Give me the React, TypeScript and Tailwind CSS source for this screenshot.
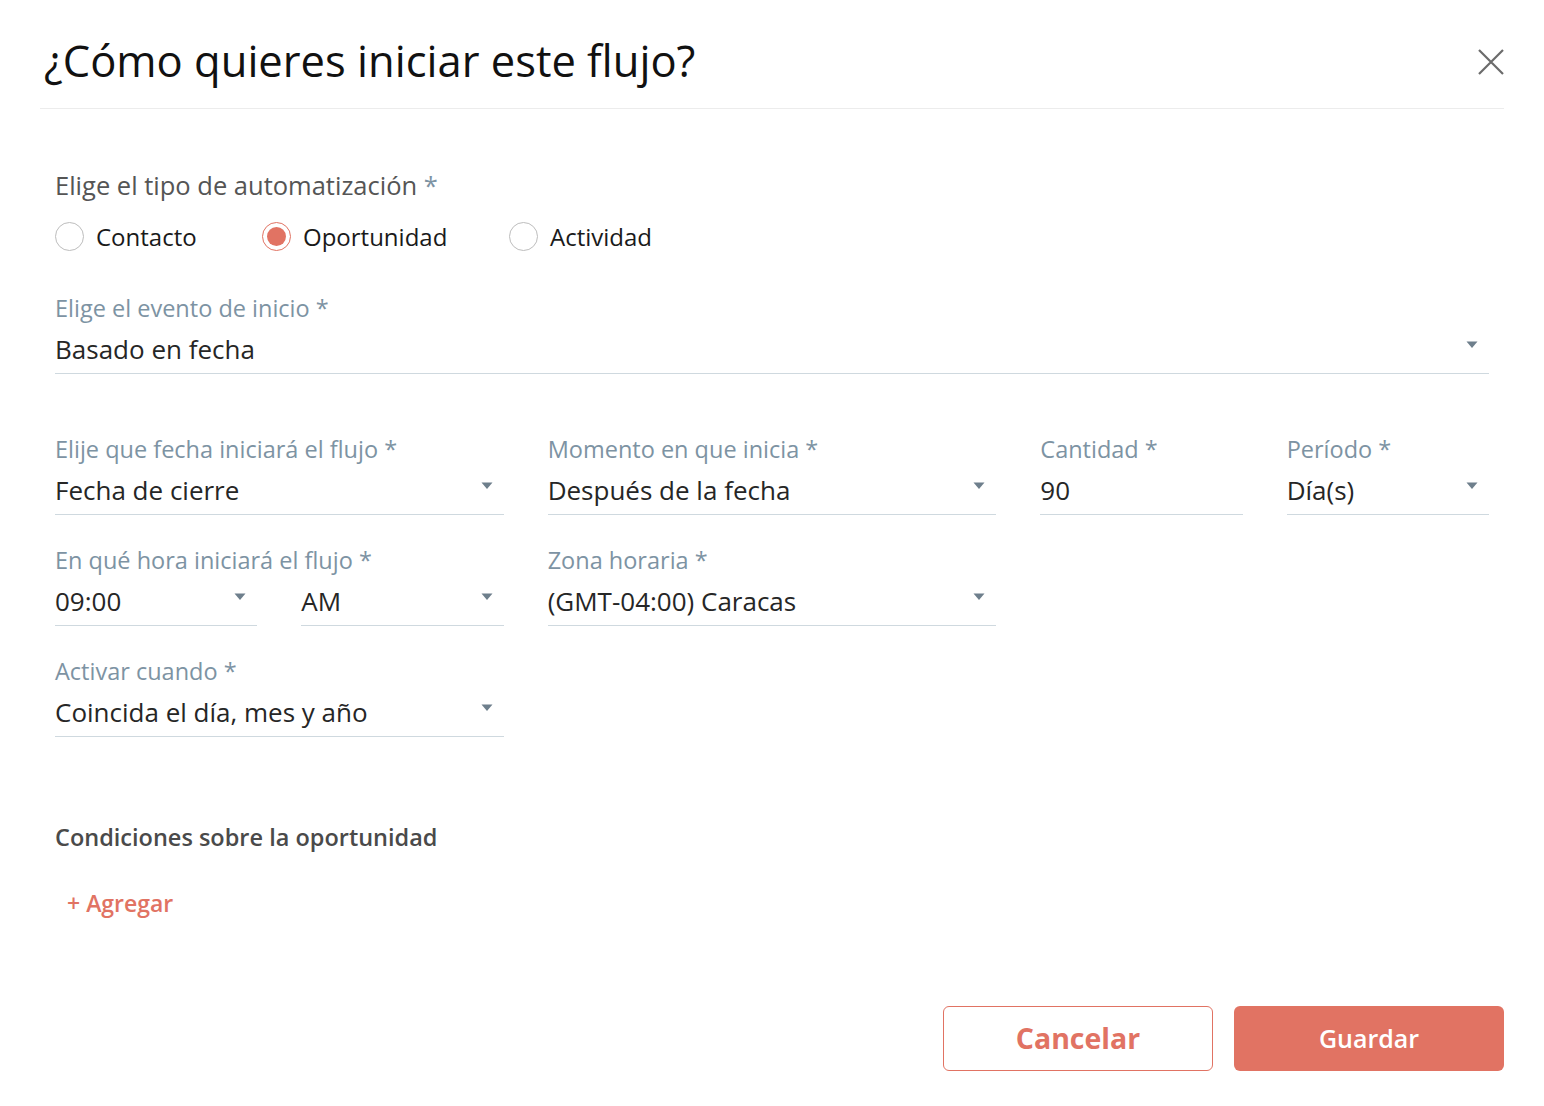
import React from "react";

const Caret = () => (
  <svg width="12" height="8" viewBox="0 0 12 8" className="shrink-0">
    <path d="M0.5 0.5 H11.5 L6 7 Z" fill="#6e7f8c" />
  </svg>
);

function Field({
  label,
  value,
  select = true,
  className = "",
}: {
  label: string;
  value: string;
  select?: boolean;
  className?: string;
}) {
  return (
    <div className={className}>
      <div className="h-[28px] whitespace-nowrap text-[23.5px] leading-[28px] text-[#7d93a3]">{label}</div>
      <div className="mt-[13px] flex items-center justify-between border-b border-[#cfd9df] pb-[10px]">
        <span className="whitespace-nowrap text-[26px] leading-[28px] text-[#262626]">{value}</span>
        {select && (
          <span className="mr-[11px] -mt-[8px]">
            <Caret />
          </span>
        )}
      </div>
    </div>
  );
}

function Radio({ label, checked = false }: { label: string; checked?: boolean }) {
  return (
    <div className="flex items-center gap-[12px]">
      <span
        className={
          checked
            ? "flex h-[29px] w-[29px] items-center justify-center rounded-full border border-[#e17363]"
            : "flex h-[29px] w-[29px] items-center justify-center rounded-full border border-[#bdbdbd]"
        }
      >
        {checked && <span className="h-[19px] w-[19px] rounded-full bg-[#e17363]" />}
      </span>
      <span className="text-[24px] leading-[28px] text-[#1a1a1a]">{label}</span>
    </div>
  );
}

export default function App() {
  return (
    <div className="h-[1106px] w-[1544px] bg-white px-[40px] font-['Open_Sans',sans-serif]">
      <header className="flex h-[109px] items-center justify-between border-b border-[#ececec] pl-[4px]">
        <h1 className="pt-[14px] text-[43.5px] leading-[48px] text-[#111]">¿Cómo quieres iniciar este flujo?</h1>
        <svg width="26" height="26" viewBox="0 0 26 26" className="mt-[16px]">
          <path d="M1 1 L25 25 M25 1 L1 25" stroke="#6b6b6b" strokeWidth="2.2" />
        </svg>
      </header>
      <main className="px-[15px]">
        <div className="mt-[62px] text-[25.5px] leading-[28px] text-[#555]">
          Elige el tipo de automatización <span className="text-[#7d93a3]">*</span>
        </div>
        <div className="mt-[23px] flex items-center">
          <div className="w-[207px]">
            <Radio label="Contacto" />
          </div>
          <div className="w-[247px]">
            <Radio label="Oportunidad" checked />
          </div>
          <Radio label="Actividad" />
        </div>

        <Field className="mt-[43px]" label="Elige el evento de inicio *" value="Basado en fecha" />

        <div className="mt-[61px] grid grid-cols-6 gap-x-[44px] gap-y-[31px]">
          <Field className="col-span-2" label="Elije que fecha iniciará el flujo *" value="Fecha de cierre" />
          <Field className="col-span-2" label="Momento en que inicia *" value="Después de la fecha" />
          <Field label="Cantidad *" value="90" select={false} />
          <Field label="Período *" value="Día(s)" />

          <Field label="En qué hora iniciará el flujo *" value="09:00" />
          <Field label={"\u00a0"} value="AM" />
          <Field className="col-span-2" label="Zona horaria *" value="(GMT-04:00) Caracas" />
          <div className="col-span-2" />

          <Field className="col-span-2" label="Activar cuando *" value="Coincida el día, mes y año" />
        </div>

        <div className="mt-[86px] text-[23.5px] font-semibold leading-[28px] text-[#4a4a4a]">
          Condiciones sobre la oportunidad
        </div>
        <div className="mt-[38px] pl-[12px] text-[23px] font-semibold leading-[28px] text-[#e17363]">+ Agregar</div>

        <div className="mt-[89px] -mr-[15px] flex justify-end gap-[21px]">
          <button className="h-[65px] w-[270px] rounded-[6px] border border-[#e17363] bg-white text-[28.5px] font-bold text-[#e17363]">
            Cancelar
          </button>
          <button className="h-[65px] w-[270px] rounded-[6px] bg-[#e17363] text-[25px] font-semibold text-white">
            Guardar
          </button>
        </div>
      </main>
    </div>
  );
}
